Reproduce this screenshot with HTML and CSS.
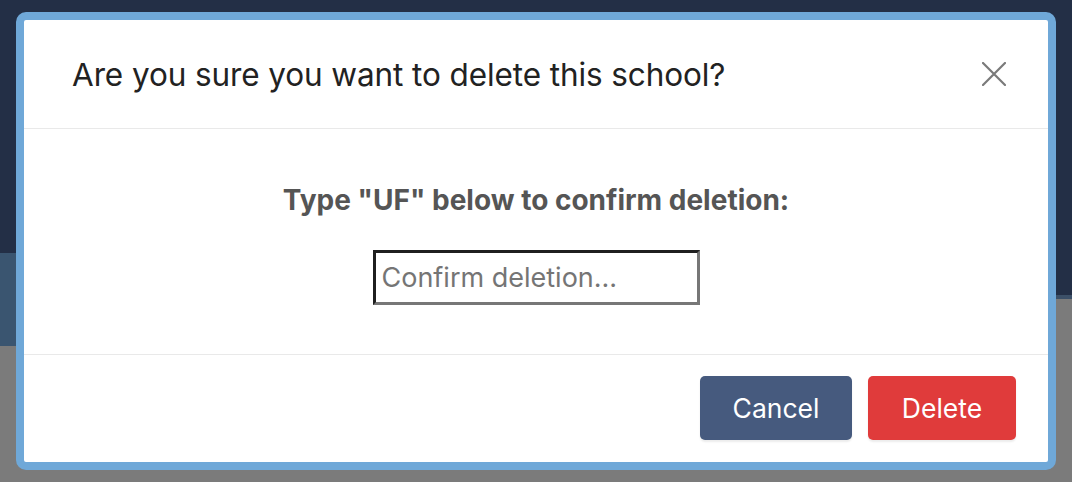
FILE: index.html
```html
<!DOCTYPE html>
<html>
<head>
<meta charset="utf-8">
<link rel="stylesheet" href="styles.css">
</head>
<body>
<div class="page">
  <div class="page-top"></div>
  <div class="page-mid">
    <div class="band-left"></div>
    <div class="band-right"></div>
  </div>
</div>
<div class="modal">
  <div class="modal-header">
    <h2 class="modal-title">Are you sure you want to delete this school?</h2>
    <button class="close" aria-label="Close">
      <svg width="24" height="24" viewBox="0 0 24 24"><path d="M1 1 L23 23 M23 1 L1 23" stroke="#7a7a7a" stroke-width="2.2" stroke-linecap="round" fill="none"/></svg>
    </button>
  </div>
  <div class="modal-body">
    <p class="confirm-label">Type "UF" below to confirm deletion:</p>
    <input class="confirm-input" type="text" placeholder="Confirm deletion...">
  </div>
  <div class="modal-footer">
    <button class="btn btn-cancel">Cancel</button>
    <button class="btn btn-delete">Delete</button>
  </div>
</div>
</body>
</html>
```

FILE: styles.css
```css
* { box-sizing: border-box; }
html, body { margin: 0; padding: 0; }
body {
  width: 1072px;
  height: 482px;
  overflow: hidden;
  background: #7b7b7b;
  font-family: Inter, "Liberation Sans", sans-serif;
  position: relative;
}
.page { display: flex; flex-direction: column; }
.page-top { height: 253px; background: #232f46; }
.page-mid { display: flex; justify-content: space-between; align-items: flex-start; }
.band-left { width: 40px; height: 93px; background: #3a5570; }
.band-right { width: 40px; height: 46px; background: #232f46; border-bottom: 4px solid #3c5068; }

.modal {
  position: absolute;
  left: 16px;
  top: 12px;
  width: 1040px;
  height: 458px;
  border: 8px solid #6fa8d8;
  border-radius: 10px;
  background: #fff;
  display: flex;
  flex-direction: column;
}
.modal-header {
  height: 109px;
  border-bottom: 1px solid #e9e9e9;
  display: flex;
  align-items: center;
  justify-content: space-between;
  padding: 0 42px 0 48px;
}
.modal-title {
  margin: 0;
  font-weight: 400;
  font-size: 31.5px;
  color: #222;
  letter-spacing: -0.1px;
}
.close {
  border: 0;
  background: none;
  padding: 0;
  width: 24px;
  height: 24px;
  display: flex;
}
.modal-body {
  height: 226px;
  border-bottom: 1px solid #e9e9e9;
  display: flex;
  flex-direction: column;
  align-items: center;
  padding-top: 52px;
}
.confirm-label {
  margin: 0;
  font-size: 28px;
  font-weight: 700;
  line-height: 39px;
  color: #555;
}
.confirm-input {
  margin-top: 30px;
  width: 327px;
  height: 55px;
  border: 3px solid;
  border-color: #1f1f1f #777 #777 #1f1f1f;
  padding: 0 6px;
  font-family: inherit;
  font-size: 27px;
  color: #333;
  background: #fff;
  outline: none;
}
.confirm-input::placeholder { color: #757575; }
.modal-footer {
  flex: 1;
  display: flex;
  justify-content: flex-end;
  align-items: flex-start;
  padding: 21px 32px 0 0;
  gap: 16px;
}
.btn {
  height: 64px;
  border: 0;
  border-radius: 5px;
  color: #fff;
  font-family: inherit;
  font-size: 26.5px;
  box-shadow: 0 2px 2px rgba(0,0,0,0.08);
}
.btn-cancel { width: 152px; background: #465a7e; }
.btn-delete { width: 148px; background: #e03b3b; }
```
